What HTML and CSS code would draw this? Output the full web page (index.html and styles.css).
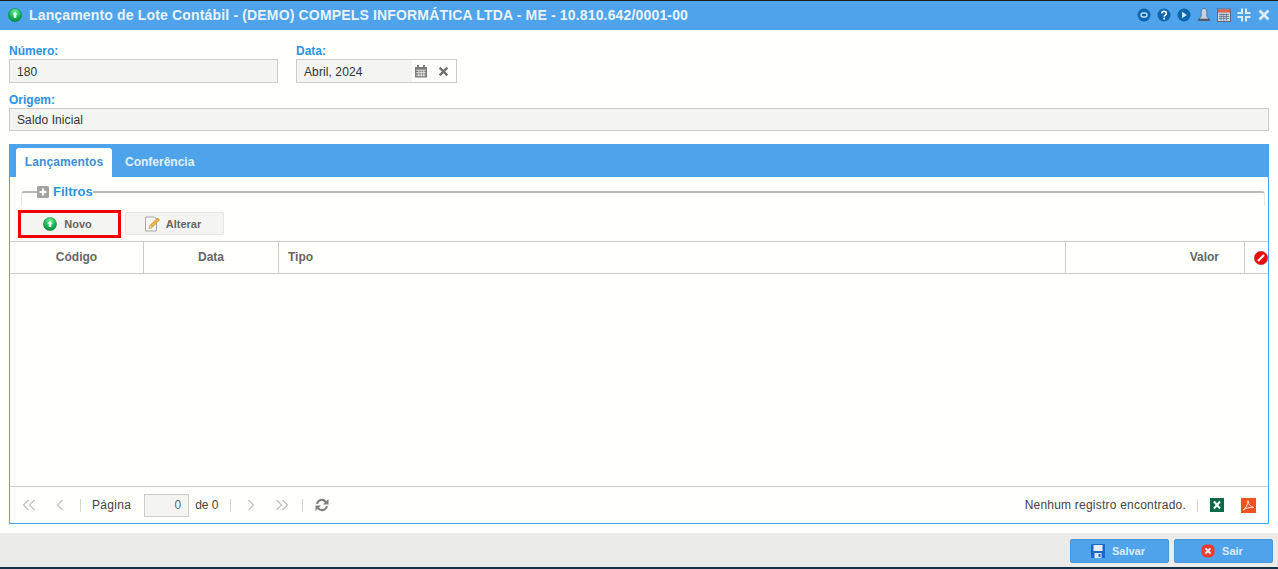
FILE: index.html
```html
<!DOCTYPE html>
<html lang="pt">
<head>
<meta charset="utf-8">
<title>Lançamento de Lote Contábil</title>
<link rel="stylesheet" href="styles.css">
</head>
<body>
<div class="app">
  <header class="titlebar">
    <svg class="ico16" viewBox="0 0 16 16"><use href="#go"/></svg>
    <h1 class="title">Lançamento de Lote Contábil - (DEMO) COMPELS INFORMÁTICA LTDA - ME - 10.810.642/0001-00</h1>
    <div class="wintools">
      <svg class="tool" viewBox="0 0 14 14"><circle cx="7" cy="7" r="6.5" fill="#0b66ad"/><rect x="4" y="5" width="6" height="4" rx="2" fill="none" stroke="#bfe0f7" stroke-width="1.4"/></svg>
      <svg class="tool" viewBox="0 0 14 14"><circle cx="7" cy="7" r="6.5" fill="#0b66ad"/><path d="M4.8 5.4c0-3 4.6-3 4.6 0 0 1.8-2.2 1.7-2.2 3.4" fill="none" stroke="#fff" stroke-width="1.5"/><rect x="6.3" y="9.7" width="1.8" height="1.8" fill="#fff"/></svg>
      <svg class="tool" viewBox="0 0 14 14"><circle cx="7" cy="7" r="6.5" fill="#0b66ad"/><path d="M5 3.8v6.4L10 7z" fill="#cfe6f8"/></svg>
      <svg class="tool" viewBox="0 0 14 14"><path d="M7 0.500c-2 0-2.800 1.500-2.800 3.500V8.500L2 11h10L9.800 8.500V4C9.800 2 9 0.500 7 0.500z" fill="#c5d2e2" stroke="#4d6078" stroke-width=".7"/><rect x="1" y="11" width="12" height="2" fill="#4d5c70"/></svg>
      <svg class="tool" viewBox="0 0 14 14"><rect x=".5" y="1" width="13" height="12.500" fill="#c7d3e0" stroke="#5d6b7c"/><rect x="1" y="1.500" width="12" height="3" fill="#e2604e"/><path d="M2 6.500h10M2 8.500h10M2 10.500h10M4 5.500v7M6.700 5.500v7M9.400 5.500v7" stroke="#66768a" stroke-width=".8"/></svg>
      <svg class="tool" viewBox="0 0 14 14"><path d="M5 .5v4.500H.5M9 .5v4.500h4.500M5 13.500V9H.5M9 13.500V9h4.500" fill="none" stroke="#dcecfa" stroke-width="2"/></svg>
      <svg class="tool" viewBox="0 0 14 14"><path d="M2.500 2.500l9 9M11.500 2.500l-9 9" stroke="#dcecfa" stroke-width="2.800"/></svg>
    </div>
  </header>

  <main class="content">
    <div class="row">
      <div class="field num">
        <label class="lbl">Número:</label>
        <div class="input ro">180</div>
      </div>
      <div class="field date">
        <label class="lbl">Data:</label>
        <div class="input dateinput">
          <span class="dateval">Abril, 2024</span>
          <span class="dateicons">
            <svg class="ic12" viewBox="0 0 14 14"><path d="M1 3h12v10.500H1z" fill="#7b7b78"/><rect x="3" y="1" width="2" height="3" fill="#7b7b78"/><rect x="9" y="1" width="2" height="3" fill="#7b7b78"/><path d="M2.200 6.200h9.600M2.200 8.700h9.600M2.200 11.200h9.600M4.800 6v6.500M7.300 6v6.500M9.800 6v6.500" stroke="#e8e8e5" stroke-width=".9"/></svg>
            <svg class="ic12 closex" viewBox="0 0 12 12"><path d="M1.800 1.800l8.400 8.400M10.200 1.800l-8.400 8.400" stroke="#727270" stroke-width="2.600"/></svg>
          </span>
        </div>
      </div>
    </div>
    <div class="field origem">
      <label class="lbl">Origem:</label>
      <div class="input ro wide">Saldo Inicial</div>
    </div>

    <section class="panel">
      <div class="tabs">
        <div class="tab active">Lançamentos</div>
        <div class="tab">Conferência</div>
      </div>
      <div class="panelbody">
        <div class="filtros">
          <div class="legend">
            <svg class="plus" viewBox="0 0 12 12"><rect width="12" height="12" rx="1.500" fill="#a3a3a1"/><path d="M6 2.500v7M2.500 6h7" stroke="#fff" stroke-width="2"/></svg>
            <span>Filtros</span>
          </div>
        </div>
        <div class="toolbar">
          <button class="btn hl"><svg class="ico14" viewBox="0 0 16 16"><use href="#go"/></svg>Novo</button>
          <button class="btn"><svg class="ico16" viewBox="0 0 16 16"><path d="M1.500 1h9l2 2v12h-11z" fill="#f6f6f2" stroke="#a9a9a6"/><path d="M5 12.500l1-3 7.500-7.500 2 2L8 11.500z" fill="#f0b94a" stroke="#b87a20" stroke-width=".7"/><path d="M5 12.500l1-3 2 2z" fill="#e8c9a0"/></svg>Alterar</button>
        </div>
        <div class="grid">
          <div class="th c1">Código</div>
          <div class="th c2">Data</div>
          <div class="th c3">Tipo</div>
          <div class="th c4">Valor</div>
          <div class="th c5"><svg class="ico14" viewBox="0 0 14 14"><circle cx="7" cy="7" r="6.700" fill="#f00808" stroke="#7d4a4a" stroke-width=".5"/><path d="M4 10l6-6" stroke="#fff" stroke-width="2.200"/></svg></div>
        </div>
        <div class="gridbody"></div>
        <div class="pager">
          <svg class="pg first" viewBox="0 0 14 12"><path d="M6.500 1L1.500 6l5 5M12.500 1l-5 5 5 5" fill="none" stroke="#c2c2c0" stroke-width="1.300"/></svg>
          <svg class="pg prev" viewBox="0 0 8 12"><path d="M6.500 1l-5 5 5 5" fill="none" stroke="#c2c2c0" stroke-width="1.300"/></svg>
          <span class="sep s1"></span>
          <span class="pgtext">Página</span>
          <span class="pgbox">0</span>
          <span class="pgtext de">de 0</span>
          <span class="sep s2"></span>
          <svg class="pg next" viewBox="0 0 8 12"><path d="M1.500 1l5 5-5 5" fill="none" stroke="#c2c2c0" stroke-width="1.300"/></svg>
          <svg class="pg last" viewBox="0 0 14 12"><path d="M1.500 1l5 5-5 5M7.500 1l5 5-5 5" fill="none" stroke="#c2c2c0" stroke-width="1.300"/></svg>
          <span class="sep s3"></span>
          <svg class="refresh" viewBox="0 0 16 16"><path d="M2 7a6 6 0 0 1 10.500-3L14.500 2v5.500H9l2-2A4 4 0 0 0 4 7zM14 9a6 6 0 0 1-10.500 3L1.500 14V8.500H7l-2 2A4 4 0 0 0 12 9z" fill="#7f7f7d"/></svg>
          <span class="pagerright">
            <span class="pgtext">Nenhum registro encontrado.</span>
            <span class="sep s4"></span>
            <svg class="doc xls" viewBox="0 0 14 14"><rect width="14" height="14" fill="#0b6b48"/><path d="M4 3.500l6 7M10 3.500l-6 7" stroke="#fff" stroke-width="2"/></svg>
            <svg class="doc pdf" viewBox="0 0 15 15"><rect width="15" height="15" fill="#f4511e"/><path d="M2 12c3-1.500 4.500-5 5-9.500.5 4 2.500 6.500 6 7-4-.5-8 .5-11 2.500z" fill="none" stroke="#ffe3d8" stroke-width="1"/></svg>
          </span>
        </div>
      </div>
    </section>
  </main>

  <footer class="footer">
    <button class="fbtn"><svg class="ico14" viewBox="0 0 14 14"><path d="M0 1.500A1.500 1.500 0 0 1 1.500 0H14v14H0z" fill="#1a66c9"/><rect x="2.500" y="1" width="9" height="6" fill="#e9eef4"/><rect x="3.500" y="9" width="7" height="5" fill="#dfe5ec"/><rect x="7.500" y="10" width="2" height="3" fill="#1a66c9"/></svg>Salvar</button>
    <button class="fbtn"><svg class="ico14" viewBox="0 0 14 14"><rect x=".5" y=".5" width="13" height="13" rx="5" fill="#ef3a2d"/><path d="M4.500 4.500l5 5M9.500 4.500l-5 5" stroke="#fff" stroke-width="2"/></svg>Sair</button>
  </footer>
</div>

<svg class="defs" width="0" height="0">
  <defs>
    <radialGradient id="gg" cx=".5" cy=".25" r=".85"><stop offset="0" stop-color="#6cf09a"/><stop offset=".6" stop-color="#0fb04c"/><stop offset="1" stop-color="#067f34"/></radialGradient>
    <g id="go"><circle cx="8" cy="8" r="7.500" fill="url(#gg)" stroke="#0a6b30" stroke-width=".5"/><path d="M8 4.500l3 3H9.400V11.500H6.600V7.500H5z" fill="#fff"/></g>
  </defs>
</svg>
</body>
</html>
```

FILE: styles.css
```css
* { box-sizing: border-box; }
html, body { margin: 0; height: 569px; overflow: hidden; }
body { font-family: "Liberation Sans", Arial, sans-serif; font-size: 12px; color: #333; background: #fffffc; }
.defs { position: absolute; }
.app { height: 569px; display: flex; flex-direction: column; border-top: 1px solid #1c1c1a; border-bottom: 2px solid #15324a; }

.titlebar { height: 29px; flex: none; background: #4fa3ea; display: flex; align-items: center; padding: 0 7px 1px 8px; }
.ico16 { width: 16px; height: 16px; flex: none; }
.ico14 { width: 14px; height: 14px; flex: none; }
.titlebar .ico16 { width: 14px; height: 14px; }
.title { margin: 0 0 0 7px; font-size: 14px; font-weight: bold; color: #e9f3fb; white-space: nowrap; flex: 1; letter-spacing: .16px; }
.wintools { display: flex; align-items: center; gap: 6px; }
.tool { width: 14px; height: 14px; flex: none; }

.content { flex: 1; padding: 14px 9px 0; display: flex; flex-direction: column; min-height: 0; }
.row { display: flex; gap: 18px; }
.field { display: flex; flex-direction: column; }
.lbl { font-size: 12px; font-weight: bold; color: #2a93e4; line-height: 14px; height: 15px; }
.num { width: 269px; }
.date { width: 161px; }
.input { height: 24px; border: 1px solid #ccccc9; background: #f4f5f2; line-height: 23px; padding: 1px 0 0 7px; font-size: 12px; color: #333; letter-spacing: .1px; }
.dateinput { display: flex; padding: 0; }
.dateval { flex: 1; padding: 1px 0 0 7px; }
.dateicons { width: 44px; background: #fffffc; display: flex; align-items: center; gap: 10px; padding-left: 2px; }
.ic12 { width: 14px; height: 14px; flex: none; }
.closex { width: 11px; height: 11px; }
.origem { margin-top: 10px; }
.wide { height: 23px; line-height: 21px; }

.panel { margin-top: 13px; height: 380px; border: 1px solid #4fa3ea; display: flex; flex-direction: column; }
.tabs { height: 32px; flex: none; background: #4fa3ea; display: flex; align-items: flex-end; padding-left: 6px; }
.tab { font-size: 12px; font-weight: bold; color: #e3f0fb; height: 29px; padding: 0 10px; margin-right: 3px; line-height: 29px; }
.tab.active { width: 96px; padding: 0; text-align: center; background: #fffffc; color: #3d8fd6; border-radius: 3px 3px 0 0; letter-spacing: .1px; }
.panelbody { flex: 1; display: flex; flex-direction: column; min-height: 0; }

.filtros { margin: 14px 3px 0 11px; height: 15px; border: 1px solid #e6e6e3; border-top: 2px solid #b9b9b6; border-bottom: 0; border-radius: 3px 3px 0 0; position: relative; flex: none; }
.legend { position: absolute; left: 15px; top: -8px; display: flex; align-items: center; gap: 4px; background: #fffffc; font-size: 13px; font-weight: bold; color: #2a93e4; line-height: 14px; }
.plus { width: 12px; height: 12px; }

.toolbar { height: 35px; flex: none; display: flex; align-items: center; gap: 4px; padding: 0 0 0 8px; }
.btn { width: 99px; height: 23px; background: #f4f5f2; border: 1px solid #e6e6e3; border-radius: 2px; font: bold 11px "Liberation Sans", Arial, sans-serif; color: #666; display: flex; align-items: center; justify-content: center; gap: 6px; padding: 0 4px 0 0; }
.btn.hl { width: 103px; height: 28px; border: 3px solid #ee0000; gap: 7px; border-radius: 0; }

.grid { display: flex; height: 33px; flex: none; border-top: 1px solid #ccccc9; border-bottom: 1px solid #ccccc9; }
.th { font-size: 12px; font-weight: bold; color: #666; line-height: 31px; border-right: 1px solid #ccccc9; text-align: center; }
.c1 { width: 134px; }
.c2 { width: 135px; }
.c3 { flex: 1; text-align: left; padding-left: 9px; }
.c4 { width: 179px; text-align: right; padding-right: 25px; }
.c5 { width: 23px; border-right: 0; display: flex; align-items: center; justify-content: flex-end; }
.gridbody { flex: 1; }

.pager { height: 37px; flex: none; border-top: 1px solid #ccccc9; display: flex; align-items: center; }
.pg { height: 12px; flex: none; }
.first { width: 14px; margin-left: 12px; }
.prev { width: 8px; margin-left: 20px; }
.sep { width: 1px; height: 13px; background: #d4d4d1; flex: none; }
.s1 { margin-left: 16px; }
.pgtext { font-size: 12px; color: #444; letter-spacing: .22px; white-space: nowrap; }
.s1 + .pgtext { margin-left: 11px; letter-spacing: .3px; }
.pgbox { width: 45px; height: 23px; margin-left: 13px; border: 1px solid #ccccc9; background: #f4f5f2; text-align: right; line-height: 21px; padding-right: 7px; color: #666; font-size: 12px; flex: none; }
.de { margin-left: 6px; letter-spacing: 0; }
.s2 { margin-left: 11px; }
.next { width: 8px; margin-left: 16px; }
.last { width: 14px; margin-left: 20px; }
.s3 { margin-left: 13px; }
.refresh { width: 16px; height: 16px; margin-left: 11px; flex: none; }
.pagerright { margin-left: auto; display: flex; align-items: center; padding-right: 12px; }
.s4 { margin-left: 11px; }
.doc { flex: none; }
.xls { width: 14px; height: 14px; margin-left: 12px; }
.pdf { width: 15px; height: 15px; margin-left: 17px; }

.footer { height: 34px; flex: none; background: #ebebe9; display: flex; justify-content: flex-end; align-items: center; gap: 5px; padding: 2px 5px 0 0; }
.fbtn { width: 99px; height: 24px; background: #4fa3ea; border: 1px solid #4896da; border-radius: 2px; font: bold 11px "Liberation Sans", Arial, sans-serif; color: #dcecfa; display: flex; align-items: center; justify-content: center; gap: 7px; padding: 0 3px 0 0; }
```
